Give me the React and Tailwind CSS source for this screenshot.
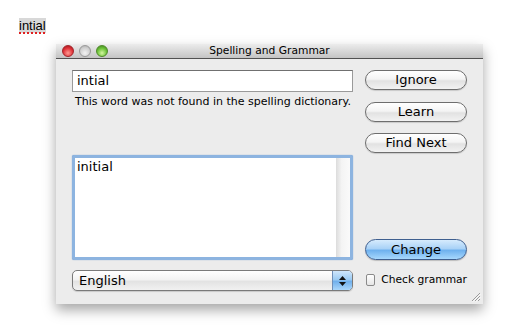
export default function App() {
  const btn =
    'h-[20px] w-[102px] rounded-full border border-[#6e6e6e] bg-[linear-gradient(to_bottom,#ffffff_0%,#f4f4f4_45%,#e2e2e2_55%,#f2f2f2_100%)] text-[13px] leading-[18px] text-black text-center shadow-[0_1px_1px_rgba(0,0,0,0.15)]';

  return (
    <div className="w-[512px] h-[330px] bg-white overflow-hidden font-['DejaVu_Sans',sans-serif]">
      {/* misspelled word in the document */}
      <div className="pt-[13px] pl-[19px] h-[44px]">
        <span className="inline-block bg-[#d8d8d8] font-['Liberation_Sans',Arial,sans-serif] text-[13px] leading-[15px] text-black underline decoration-dotted decoration-[#e02020] decoration-2 underline-offset-[2px]">
          intial
        </span>
      </div>

      {/* panel window */}
      <div className="ml-[56px] w-[427px] h-[260px] bg-[#ececec] shadow-[0_6px_12px_rgba(0,0,0,0.35)] flex flex-col">
        {/* title bar */}
        <div className="relative h-[15px] shrink-0 bg-[linear-gradient(to_bottom,#ececec,#c4c4c4)] border-b border-[#515151] flex items-center justify-center">
          <div className="absolute left-[6px] top-[1px] flex gap-[5px]">
            <span className="w-[12px] h-[12px] rounded-full border border-[#a3252a] bg-[radial-gradient(circle_at_50%_70%,#ff9a92,#e0343a_55%,#9c1016)]" />
            <span className="w-[12px] h-[12px] rounded-full border border-[#9a9a9a] bg-[radial-gradient(circle_at_50%_70%,#f4f4f4,#cfcfcf_60%,#a8a8a8)]" />
            <span className="w-[12px] h-[12px] rounded-full border border-[#4f8a2a] bg-[radial-gradient(circle_at_50%_70%,#d4f7a0,#6cc238_55%,#3c7d1a)]" />
          </div>
          <span className="text-[10.7px] leading-none text-black">Spelling and Grammar</span>
        </div>

        {/* body */}
        <div className="relative flex-1 flex px-[16px] gap-[12px]">
          {/* left column */}
          <div className="w-[281px] flex flex-col">
            <div className="mt-[11px] h-[22px] bg-white border border-[#9a9a9a] border-t-[#707070] px-[4px] text-[13px] leading-[20px] text-black">
              intial
            </div>
            <div className="mt-[3px] pl-[3px] text-[11px] leading-[13px] text-black whitespace-nowrap">
              This word was not found in the spelling dictionary.
            </div>
            <div className="mt-[47px] h-[105px] rounded-[2px] border-[3px] border-[#8db4e0] shadow-[0_0_1px_#5a8ccc] bg-white flex">
              <div className="flex-1 px-[2px] pt-[1px] text-[13px] leading-[16px] text-black">initial</div>
              <div className="w-[14px] bg-[linear-gradient(to_right,#dcdcdc,#f4f4f4_40%,#fafafa)]" />
            </div>
            <div className="mt-[10px] h-[21px] rounded-[5px] border border-[#7a7a7a] bg-[linear-gradient(to_bottom,#ffffff_0%,#f3f3f3_45%,#e3e3e3_55%,#f1f1f1_100%)] flex overflow-hidden shadow-[0_1px_1px_rgba(0,0,0,0.15)]">
              <div className="flex-1 pl-[6px] text-[13px] leading-[19px] text-black">English</div>
              <div className="w-[20px] border-l border-[#6f8fb8] bg-[linear-gradient(to_bottom,#cfe6fb_0%,#9ccbf3_45%,#71b0ec_55%,#a9d6fb_100%)] flex flex-col items-center justify-center gap-[2px]">
                <svg width="7" height="4" viewBox="0 0 7 4"><path d="M3.5 0 L7 4 L0 4 Z" fill="#111" /></svg>
                <svg width="7" height="4" viewBox="0 0 7 4"><path d="M0 0 L7 0 L3.5 4 Z" fill="#111" /></svg>
              </div>
            </div>
          </div>

          {/* right column */}
          <div className="w-[102px] flex flex-col">
            <button className={`mt-[11px] ${btn}`}>Ignore</button>
            <button className={`mt-[12px] ${btn}`}>Learn</button>
            <button className={`mt-[11px] ${btn}`}>Find Next</button>
            <button className="mt-[86px] h-[21px] w-[102px] rounded-full border border-[#3f5f8f] bg-[linear-gradient(to_bottom,#d6ebfd_0%,#a9d2f7_45%,#6fb1ee_55%,#a7d8fd_100%)] text-[13px] leading-[19px] text-black text-center shadow-[0_1px_1px_rgba(0,0,0,0.2)]">
              Change
            </button>
            <div className="mt-[13px] flex items-center gap-[6px] pl-[1px]">
              <span className="w-[12px] h-[12px] rounded-[2px] border border-[#8a8a8a] bg-[linear-gradient(to_bottom,#ffffff,#e6e6e6)]" />
              <span className="text-[10.7px] leading-[14px] text-black whitespace-nowrap">Check grammar</span>
            </div>
          </div>

          {/* resize grip */}
          <svg className="absolute right-[2px] bottom-[2px]" width="11" height="11" viewBox="0 0 11 11">
            <path d="M10 2 L2 10 M10 5 L5 10 M10 8 L8 10" stroke="#9a9a9a" strokeWidth="1" />
            <path d="M10.8 2.8 L2.8 10.8 M10.8 5.8 L5.8 10.8" stroke="#ffffff" strokeWidth="0.8" />
          </svg>
        </div>
      </div>
    </div>
  );
}
